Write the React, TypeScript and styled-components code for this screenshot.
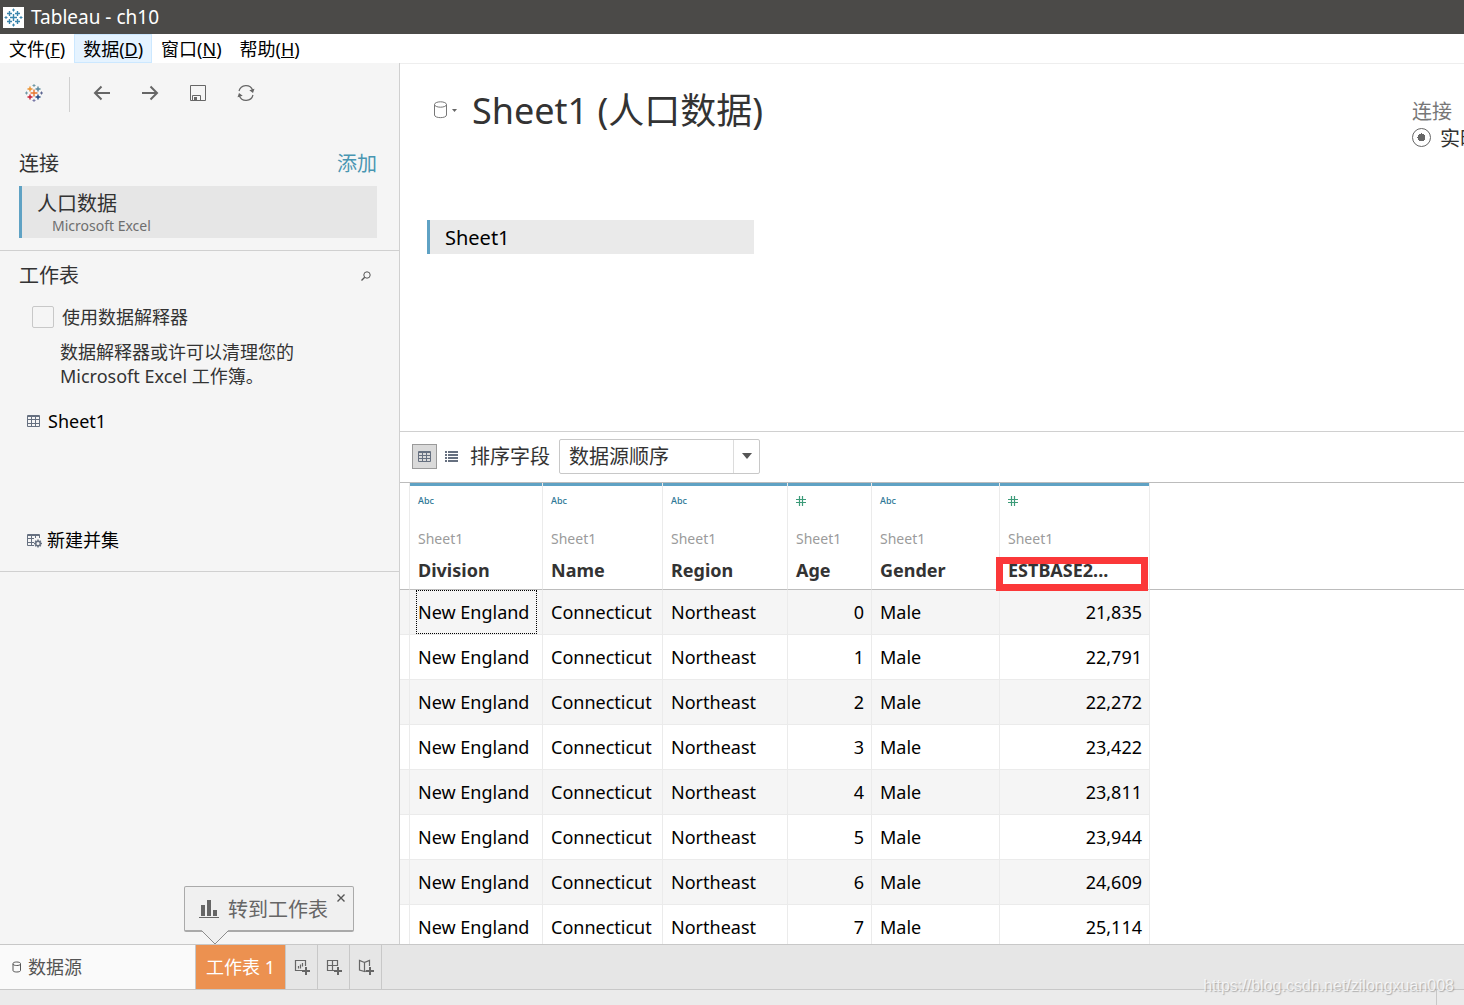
import React, { useState } from "react";
import styled, { createGlobalStyle } from "styled-components";

const SANS = '"Noto Sans", "Noto Sans CJK SC", sans-serif';

const GlobalStyle = createGlobalStyle`
  *, *::before, *::after { box-sizing: border-box; }
  body {
    margin: 0;
    font: 400 18px/24px ${SANS};
    color: #000;
    background: #fff;
  }
  button, input, select {
    margin: 0;
    padding: 0;
    font: inherit;
    color: inherit;
    background: none;
    border: 0;
    border-radius: 0;
  }
  h1, h2, p { margin: 0; font-weight: 400; }
  svg { display: block; flex: none; }
`;

const Window = styled.div`
  display: flex;
  flex-direction: column;
  height: 100vh;
  overflow: hidden;
`;

const TitleBar = styled.header`
  display: flex;
  align-items: center;
  gap: 7px;
  flex: none;
  height: 34px;
  padding-left: 3px;
  font-size: 19px;
  color: #fff;
  background: #4b4a48;
`;

const MenuBar = styled.nav`
  display: flex;
  flex: none;
  height: 29px;
`;

const MenuItem = styled.button<{ $active?: boolean }>`
  padding: 0 8px;
  border: 1px solid ${(p) => (p.$active ? "#cce8ff" : "transparent")};
  background: ${(p) => (p.$active ? "#e5f3ff" : "transparent")};
  white-space: nowrap;
`;

const Workspace = styled.div`
  display: grid;
  grid-template-columns: 400px minmax(0, 1fr);
  flex: 1;
  min-height: 0;
`;

const Sidebar = styled.aside`
  display: flex;
  flex-direction: column;
  background: #f5f5f5;
  border-right: 1px solid #d0d0d0;
  color: #333;
`;

const Toolbar = styled.div`
  display: flex;
  align-items: center;
  gap: 24px;
  height: 60px;
  padding-left: 22px;
`;

const IconButton = styled.button`
  display: flex;
  align-items: center;
  justify-content: center;
  width: 24px;
  height: 24px;
  color: #666;
`;

const ToolbarDivider = styled.span`
  width: 1px;
  height: 35px;
  margin: 2px -4px 0 -1px;
  background: #d0d0d0;
`;

const Section = styled.section`
  display: flex;
  flex-direction: column;
  border-bottom: 1px solid #d0d0d0;
`;

const SectionHead = styled.div<{ $tall?: boolean }>`
  display: flex;
  align-items: center;
  justify-content: space-between;
  height: ${(p) => (p.$tall ? 63 : 48)}px;
  padding: ${(p) => (p.$tall ? "18px 22px 0 19px" : "1px 27px 0 19px")};
`;

const Heading = styled.h2`
  font-size: 20px;
  line-height: 28px;
`;

const AddLink = styled.a`
  font-size: 20px;
  line-height: 28px;
  color: #4996b2;
  text-decoration: none;
`;

const Connection = styled.button`
  display: block;
  height: 52px;
  margin: 0 22px 12px 19px;
  padding: 0 0 0 15px;
  border-left: 3px solid #5fa2c4;
  background: #e6e6e6;
  text-align: left;
`;

const ConnectionName = styled.span`
  display: block;
  font-size: 20px;
  line-height: 26px;
`;

const ConnectionType = styled.span`
  display: block;
  padding-left: 15px;
  font-size: 14px;
  line-height: 17px;
  color: #6e6e6e;
`;

const SmallButton = styled(IconButton)`
  width: 12px;
  height: 12px;
`;

const Interpreter = styled.label`
  display: flex;
  align-items: center;
  gap: 8px;
  height: 36px;
  padding-left: 32px;
`;

const CheckBox = styled.input`
  appearance: none;
  width: 22px;
  height: 22px;
  border: 1px solid #c8c8c8;
  border-radius: 2px;
  &:checked { background: #5fa2c4; }
`;

const Hint = styled.p`
  padding: 5px 60px 19px;
`;

const SheetList = styled.div`
  display: flex;
  flex-direction: column;
  height: 119px;
`;

const SheetItem = styled.button`
  display: flex;
  align-items: center;
  gap: 4px;
  height: 28px;
  padding-left: 26px;
  color: #000;
`;

const UnionRow = styled.div`
  height: 45px;
`;

const Main = styled.main`
  display: flex;
  flex-direction: column;
  min-width: 0;
  overflow: hidden;
  background: #fff;
  border-top: 1px solid #eee;
`;

const Canvas = styled.section`
  display: flex;
  flex-direction: column;
  flex: none;
  height: 368px;
  border-bottom: 1px solid #d0d0d0;
`;

const CanvasHead = styled.div`
  display: flex;
  align-items: flex-start;
  height: 156px;
  padding: 22px 0 0 32px;
  color: #333;
`;

const SourceMenu = styled.button`
  display: flex;
  align-items: center;
  gap: 4px;
  width: 40px;
  height: 48px;
`;

const SourceTitle = styled.h1`
  flex: 1;
  font-size: 36px;
  line-height: 50px;
  white-space: nowrap;
`;

const Mode = styled.fieldset`
  width: 52px;
  min-width: 0;
  margin: 0;
  padding: 12px 0 0;
  border: 0;
  font-size: 20px;
  white-space: nowrap;
`;

const ModeTitle = styled.div`
  line-height: 28px;
  color: #777;
`;

const ModeOption = styled.label`
  display: flex;
  align-items: flex-start;
  gap: 9px;
  line-height: 26px;
`;

const Radio = styled.input`
  appearance: none;
  flex: none;
  width: 19px;
  height: 19px;
  margin-top: 2px;
  border: 1px solid #666;
  border-radius: 50%;
  &:checked { background: radial-gradient(circle, #666 0 4px, transparent 4px); }
`;

const TablePill = styled.button`
  width: 327px;
  height: 34px;
  margin-left: 27px;
  padding: 2px 0 0 15px;
  border-left: 3px solid #5fa2c4;
  background: #eaeaea;
  font-size: 20px;
  text-align: left;
`;

const GridToolbar = styled.div`
  display: flex;
  align-items: center;
  flex: none;
  height: 51px;
  padding: 0 0 2px 12px;
  border-bottom: 1px solid #bcbcbc;
  font-size: 20px;
  color: #333;
`;

const ViewButton = styled.button<{ $active?: boolean }>`
  display: flex;
  align-items: center;
  justify-content: center;
  width: 25px;
  height: 25px;
  margin-right: ${(p) => (p.$active ? 2 : 6)}px;
  color: #667080;
  border: 1px solid ${(p) => (p.$active ? "#9a9a9a" : "transparent")};
  background: ${(p) => (p.$active ? "#dadada" : "transparent")};
`;

const SortLabel = styled.label`
  padding-top: 2px;
`;

const SelectBox = styled.div`
  display: grid;
  grid-template-columns: minmax(0, 1fr) 26px;
  align-items: center;
  width: 201px;
  height: 35px;
  margin-left: 9px;
  border: 1px solid #c8c8c8;
  border-radius: 2px;
`;

const Select = styled.select`
  grid-row: 1;
  grid-column: 1 / 3;
  width: 100%;
  height: 33px;
  padding: 2px 0 0 9px;
  appearance: none;
`;

const SelectArrow = styled.span`
  display: flex;
  grid-row: 1;
  grid-column: 2;
  align-items: center;
  justify-content: center;
  height: 33px;
  border-left: 1px solid #dcdcdc;
  pointer-events: none;
`;

const GridArea = styled.div`
  flex: 1;
  min-height: 0;
  overflow: hidden;
`;

const DataTable = styled.table`
  width: 100%;
  table-layout: fixed;
  border-collapse: separate;
  border-spacing: 0;
`;

const HeadCell = styled.th<{ $blank?: boolean; $last?: boolean }>`
  position: relative;
  height: 107px;
  padding: 3px 0 0 8px;
  border-right: ${(p) => (p.$last ? "0" : "1px solid #ebebeb")};
  border-bottom: 1px solid #bcbcbc;
  background: ${(p) => (p.$blank ? "none" : "linear-gradient(#5fa2c4 0 3px, transparent 3px) padding-box no-repeat")};
  text-align: left;
  vertical-align: top;
  color: #333;
`;

const TypeMark = styled.div`
  display: flex;
  align-items: center;
  height: 29px;
  font-size: 9px;
  font-weight: 500;
  color: #2c7795;
`;

const SheetName = styled.div`
  padding: 12px 0 7px;
  font-size: 14px;
  font-weight: 400;
  color: #9b9b9b;
`;

const Marker = styled.span`
  position: absolute;
  top: 74px;
  left: -4px;
  width: 152px;
  height: 34px;
  border: 7px solid #fb3839;
`;

const Row = styled.tr`
  height: 45px;
  &:nth-child(odd) > td:not(:last-child) { background: #f5f5f5; }
`;

const Cell = styled.td<{ $right?: boolean; $focus?: boolean }>`
  height: 45px;
  padding: ${(p) => (p.$focus ? "0 5px 0 6px" : "0 7px 0 8px")};
  border-right: 1px solid #ebebeb;
  border-bottom: 1px solid #ebebeb;
  text-align: ${(p) => (p.$right ? "right" : "left")};
  white-space: nowrap;
  &:last-child { border: 0; }
`;

const FocusFrame = styled.span`
  display: block;
  height: 44px;
  padding: 9px 1px;
  border: 1px dotted #000;
`;

const TabBar = styled.footer`
  display: flex;
  flex: none;
  height: 46px;
  border-top: 1px solid #c8c8c8;
  border-bottom: 1px solid #c8c8c8;
  background: #e6e6e6;
`;

const SourceTab = styled.button`
  display: flex;
  align-items: center;
  gap: 6px;
  width: 196px;
  padding-left: 12px;
  border-right: 1px solid #c8c8c8;
  background: #fafafa;
  color: #555;
`;

const SheetTabSlot = styled.div`
  position: relative;
  width: 90px;
  border-right: 1px solid #c8c8c8;
`;

const SheetTab = styled.button`
  width: 100%;
  height: 44px;
  background: #ec9150;
  color: #fff;
`;

const NewTab = styled.button`
  display: flex;
  align-items: center;
  justify-content: center;
  width: 32px;
  border-right: 1px solid #c8c8c8;
`;

const Callout = styled.div`
  position: absolute;
  left: -12px;
  bottom: 57px;
  display: flex;
  align-items: center;
  gap: 9px;
  width: 170px;
  height: 46px;
  padding-left: 14px;
  border: 1px solid #aaa;
  border-bottom-width: 2px;
  border-radius: 2px;
  background: #f0f0f0;
  color: #666;
  font-size: 20px;
  line-height: 28px;
  white-space: nowrap;
`;

const CalloutText = styled.span`
  padding-top: 3px;
`;

const CalloutClose = styled.button`
  position: absolute;
  top: 6px;
  right: 7px;
  width: 10px;
  height: 10px;
`;

const CalloutTail = styled.span`
  position: absolute;
  left: 16px;
  top: 42px;
`;

const StatusBar = styled.div`
  display: flex;
  justify-content: flex-end;
  flex: none;
  height: 15px;
  padding-right: 27px;
  background: #ebebeb;
`;

const StatusDivider = styled.span`
  width: 1px;
  background: #c8c8c8;
`;

const Watermark = styled.span`
  position: absolute;
  right: 10px;
  bottom: 9px;
  font: 16px/20px "Liberation Sans", sans-serif;
  color: rgba(255, 255, 255, 0.75);
  text-shadow: 1px 1px 1px rgba(120, 120, 120, 0.5);
  pointer-events: none;
`;

function plus(x: number, y: number, r: number) {
  return `M${x - r} ${y}h${r * 2}M${x} ${y - r}v${r * 2}`;
}

function Logo({ mono, size }: { mono?: boolean; size: number }) {
  const marks: [number, number, number, string, number][] = [
    [9, 9, 3.5, "#e8762d", 1.4],
    [5, 5, 2.5, "#eb912c", 1.4],
    [13, 5, 2.5, "#59879b", 1.4],
    [5, 13, 2.5, "#c72035", 1.4],
    [13, 13, 2.5, "#1f457e", 1.4],
    [9, 1.5, 1.5, "#7099a6", 1],
    [9, 16.5, 1.5, "#7b7ba8", 1],
    [1.5, 9, 1.5, "#7099a6", 1],
    [16.5, 9, 1.5, "#5b6591", 1],
  ];
  return (
    <svg width={size} height={size} viewBox={mono ? "-1.5 -1.5 21 21" : "0 0 18 18"} aria-hidden="true">
      {mono && <rect x="-1.5" y="-1.5" width="21" height="21" fill="#fff" />}
      {marks.map(([x, y, r, color, w], i) => (
        <path key={i} d={plus(x, y, r)} stroke={mono ? "#3b85ad" : color} strokeWidth={w} fill="none" />
      ))}
    </svg>
  );
}

function ArrowIcon({ right }: { right?: boolean }) {
  return (
    <svg width="18" height="16" viewBox="0 0 18 16" fill="none" stroke="currentColor" strokeWidth="2">
      <path d={right ? "M1 8h15M9.500 1.500l6.500 6.500l-6.500 6.500" : "M17 8H2M8.500 1.500L2 8l6.500 6.500"} />
    </svg>
  );
}

function SaveIcon() {
  return (
    <svg width="16" height="16" viewBox="0 0 16 16" fill="none" stroke="#666">
      <path d="M.5.500h15v15h-15zM2.500 15v-4.500h8v5" />
      <path d="M4 12h3v3h-3z" fill="#666" stroke="none" />
    </svg>
  );
}

function RefreshIcon() {
  return (
    <svg width="18" height="18" viewBox="0 0 18 18" fill="none" stroke="#666" strokeWidth="1.200">
      <path d="M2 7a7.200 7.200 0 0 1 13.700-.8M16 11a7.200 7.200 0 0 1-13.700.8" />
      <path d="M12.300 6.200l5.200-1.500l-1.500 4.300zM5.700 11.800L.5 13.300L2 9z" fill="#666" stroke="none" />
    </svg>
  );
}

function SearchIcon() {
  return (
    <svg width="10" height="10" viewBox="0 0 10 10" fill="none" stroke="#555">
      <circle cx="6" cy="4" r="3.200" />
      <path d="M3.700 6.300L.5 9.500" strokeWidth="1.300" />
    </svg>
  );
}

function GridIcon({ gear }: { gear?: boolean }) {
  return (
    <svg width={gear ? 17 : 18} height="16" viewBox={gear ? "0 0 17 16" : "0 0 18 16"} fill="none" stroke="#667080">
      <path d="M1.500 2.500h12v11h-12zM1 3.500h13" />
      <path d="M1.500 6.500h12M1.500 10.500h12M5.500 3v10.500M9.500 3v10.500" />
      {gear && (
        <>
          <path d="M8 6h9v10H8z" fill="#f5f5f5" stroke="none" />
          <circle cx="12" cy="11.500" r="2.300" strokeWidth="1.500" />
          <path d="M12 7.500v1.500M12 14v1.500M8 11.500h1.500M14.500 11.500H16M9.200 8.700l1 1M13.800 13.300l1 1M9.200 14.300l1-1M13.800 9.700l1-1" strokeWidth="1.500" />
        </>
      )}
    </svg>
  );
}

function ViewGridIcon() {
  return (
    <svg width="13" height="11" viewBox="0 0 13 11" fill="none" stroke="currentColor">
      <path d="M.5.500h12v10H.5zM.5 1.500h12M.5 4.500h12M.5 7.500h12M4.500 1v9.500M8.500 1v9.500" />
    </svg>
  );
}

function ListIcon() {
  return (
    <svg width="13" height="11" viewBox="0 0 13 11" fill="currentColor">
      {[0, 3, 6, 9].map((y) => (
        <path key={y} d={`M0 ${y}h2v2H0zM3 ${y}h10v2H3z`} />
      ))}
    </svg>
  );
}

function CylinderIcon({ small }: { small?: boolean }) {
  return small ? (
    <svg width="10" height="12" viewBox="0 0 10 12" fill="none" stroke="#555">
      <path d="M1 2.500c0-2 7.500-2 7.500 0v7c0 2-7.500 2-7.500 0zM1 3c0 2 7.500 2 7.500 0" />
    </svg>
  ) : (
    <svg width="16" height="18" viewBox="0 0 16 18" fill="none" stroke="#777">
      <ellipse cx="8.500" cy="3.500" rx="6" ry="2.700" />
      <path d="M2.500 3.500v10.500c0 3.500 12 3.500 12 0V3.500" />
    </svg>
  );
}

function NumberIcon() {
  return (
    <svg width="10" height="10" viewBox="0 0 10 10" fill="none" stroke="#3c9b79" strokeWidth="1.200">
      <path d="M3.500 0v10M6.500 0v10M0 3.500h10M0 6.500h10" />
    </svg>
  );
}

function BarsIcon() {
  return (
    <svg width="20" height="18" viewBox="0 0 20 18" fill="#666">
      <path d="M2 5h4v11H2zM8 0h4v16H8zM14 10h4v6h-4zM0 17h20v1H0z" />
    </svg>
  );
}

const newTabShapes: Record<string, string> = {
  新建工作表: "M8 11.500H1.500v-10h10V7M4.500 7v2.500M6.500 5.500v4M8.500 4v3.500",
  新建仪表板: "M8 11.500H1.500v-10h10V7M1.500 6.500h10M6.500 1.500v10",
  新建故事: "M6.500 3.500l-5-2v9.500l5 1.500V3.500l5-2V7M6.500 12.500l2-.5",
};

function NewTabIcon({ shape }: { shape: string }) {
  return (
    <svg width="16" height="16" viewBox="0 0 16 16" fill="none" stroke="#666">
      <path d={shape} strokeWidth="1.200" />
      <path d="M8 12h8M12 8v8" strokeWidth="2" />
    </svg>
  );
}

const menus = [
  ["文件", "F"],
  ["数据", "D"],
  ["窗口", "N"],
  ["帮助", "H"],
];

const columns = [
  { name: "Division", width: 133 },
  { name: "Name", width: 120 },
  { name: "Region", width: 125 },
  { name: "Age", width: 84, numeric: true },
  { name: "Gender", width: 128 },
  { name: "ESTBASE2...", width: 150, numeric: true, marked: true },
];

const estimates = ["21,835", "22,791", "22,272", "23,422", "23,811", "23,944", "24,609", "25,114"];

const rows = estimates.map((estimate, age) => [
  "New England",
  "Connecticut",
  "Northeast",
  String(age),
  "Male",
  estimate,
]);

const Col = styled.col<{ $width?: number }>`
  width: ${(p) => (p.$width ? `${p.$width}px` : "auto")};
`;

export default function App() {
  const [calloutOpen, setCalloutOpen] = useState(true);

  return (
    <Window>
      <GlobalStyle />
      <TitleBar>
        <Logo mono size={21} />
        <span>Tableau - ch10</span>
      </TitleBar>
      <MenuBar>
        {menus.map(([label, key]) => (
          <MenuItem key={key} $active={key === "D"}>
            {label}(<u>{key}</u>)
          </MenuItem>
        ))}
      </MenuBar>

      <Workspace>
        <Sidebar>
          <Toolbar>
            <IconButton aria-label="Tableau"><Logo size={18} /></IconButton>
            <ToolbarDivider />
            <IconButton aria-label="后退"><ArrowIcon /></IconButton>
            <IconButton aria-label="前进"><ArrowIcon right /></IconButton>
            <IconButton aria-label="保存"><SaveIcon /></IconButton>
            <IconButton aria-label="刷新"><RefreshIcon /></IconButton>
          </Toolbar>

          <Section>
            <SectionHead $tall>
              <Heading>连接</Heading>
              <AddLink href="#add">添加</AddLink>
            </SectionHead>
            <Connection>
              <ConnectionName>人口数据</ConnectionName>
              <ConnectionType>Microsoft Excel</ConnectionType>
            </Connection>
          </Section>

          <Section>
            <SectionHead>
              <Heading>工作表</Heading>
              <SmallButton aria-label="搜索"><SearchIcon /></SmallButton>
            </SectionHead>
            <Interpreter>
              <CheckBox type="checkbox" />
              使用数据解释器
            </Interpreter>
            <Hint>
              数据解释器或许可以清理您的
              <br />
              Microsoft Excel 工作簿。
            </Hint>
            <SheetList>
              <SheetItem><GridIcon />Sheet1</SheetItem>
            </SheetList>
            <UnionRow>
              <SheetItem><GridIcon gear />新建并集</SheetItem>
            </UnionRow>
          </Section>
        </Sidebar>

        <Main>
          <Canvas>
            <CanvasHead>
              <SourceMenu aria-label="数据源菜单">
                <CylinderIcon />
                <svg width="5" height="3" viewBox="0 0 5 3"><path d="M0 0h5L2.500 3z" fill="#666" /></svg>
              </SourceMenu>
              <SourceTitle>Sheet1 (人口数据)</SourceTitle>
              <Mode>
                <ModeTitle>连接</ModeTitle>
                <ModeOption>
                  <Radio type="radio" name="mode" defaultChecked />
                  实时
                </ModeOption>
              </Mode>
            </CanvasHead>
            <TablePill>Sheet1</TablePill>
          </Canvas>

          <GridToolbar>
            <ViewButton $active aria-label="网格视图"><ViewGridIcon /></ViewButton>
            <ViewButton aria-label="列表视图"><ListIcon /></ViewButton>
            <SortLabel htmlFor="sort">排序字段</SortLabel>
            <SelectBox>
              <Select id="sort" defaultValue="source">
                <option value="source">数据源顺序</option>
              </Select>
              <SelectArrow>
                <svg width="10" height="6" viewBox="0 0 10 6"><path d="M0 0h10L5 6z" fill="#555" /></svg>
              </SelectArrow>
            </SelectBox>
          </GridToolbar>

          <GridArea>
            <DataTable>
              <colgroup>
                <Col $width={10} />
                {columns.map((c) => <Col key={c.name} $width={c.width} />)}
                <Col />
              </colgroup>
              <thead>
                <tr>
                  <HeadCell $blank />
                  {columns.map((c) => (
                    <HeadCell key={c.name} scope="col">
                      <TypeMark>{c.numeric ? <NumberIcon /> : "Abc"}</TypeMark>
                      <SheetName>Sheet1</SheetName>
                      {c.name}
                      {c.marked && <Marker />}
                    </HeadCell>
                  ))}
                  <HeadCell $blank $last />
                </tr>
              </thead>
              <tbody>
                {rows.map((row, r) => (
                  <Row key={r}>
                    <Cell />
                    {row.map((value, c) => {
                      const focused = r === 0 && c === 0;
                      return (
                        <Cell key={c} $right={columns[c].numeric} $focus={focused}>
                          {focused ? <FocusFrame>{value}</FocusFrame> : value}
                        </Cell>
                      );
                    })}
                    <Cell />
                  </Row>
                ))}
              </tbody>
            </DataTable>
          </GridArea>
        </Main>
      </Workspace>

      <TabBar>
        <SourceTab><CylinderIcon small />数据源</SourceTab>
        <SheetTabSlot>
          <SheetTab>工作表 1</SheetTab>
          {calloutOpen && (
            <Callout>
              <BarsIcon />
              <CalloutText>转到工作表</CalloutText>
              <CalloutClose aria-label="关闭" onClick={() => setCalloutOpen(false)}>
                <svg width="10" height="10" viewBox="0 0 10 10" stroke="#555" strokeWidth="1.400">
                  <path d="M1.500 1.500l7 7M8.500 1.500l-7 7" />
                </svg>
              </CalloutClose>
              <CalloutTail>
                <svg width="28" height="16" viewBox="0 0 28 16">
                  <path d="M1 0h26v2L14 15L1 2z" fill="#f0f0f0" />
                  <path d="M1 2L14 15L27 2" fill="none" stroke="#8c8c8c" />
                </svg>
              </CalloutTail>
            </Callout>
          )}
        </SheetTabSlot>
        {Object.entries(newTabShapes).map(([label, shape]) => (
          <NewTab key={label} aria-label={label}><NewTabIcon shape={shape} /></NewTab>
        ))}
      </TabBar>
      <StatusBar>
        <StatusDivider />
      </StatusBar>
      <Watermark>https://blog.csdn.net/zilongxuan008</Watermark>
    </Window>
  );
}
